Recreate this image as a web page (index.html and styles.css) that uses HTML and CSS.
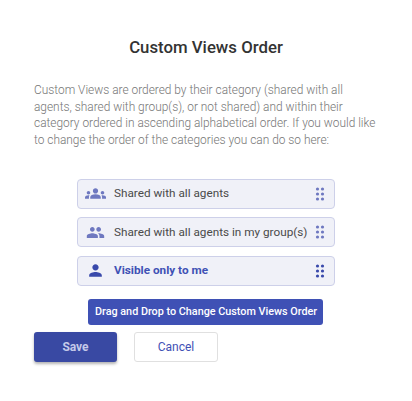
FILE: index.html
```html
<!DOCTYPE html>
<html lang="en">
<head>
<meta charset="utf-8">
<title>Custom Views Order</title>
<link rel="stylesheet" href="styles.css">
</head>
<body>
<main class="dialog">
  <h1 class="title">Custom Views Order</h1>
  <p class="desc">Custom Views are ordered by their category (shared with all agents, shared with group(s), or not shared) and within their category ordered in ascending alphabetical order. If you would like to change the order of the categories you can do so here:</p>
  <ul class="list">
    <li class="row">
      <svg class="icon" viewBox="0 0 24 24"><path d="M12 12.75c1.63 0 3.07.39 4.24.9 1.08.48 1.76 1.56 1.76 2.73V18H6v-1.61c0-1.18.68-2.26 1.76-2.73 1.17-.52 2.61-.91 4.24-.91zM4 13c1.1 0 2-.9 2-2s-.9-2-2-2-2 .9-2 2 .9 2 2 2zm1.13 1.1C4.76 14.04 4.39 14 4 14c-.99 0-1.93.21-2.78.58C.48 14.9 0 15.62 0 16.43V18h4.5v-1.61c0-.83.23-1.61.63-2.29zM20 13c1.1 0 2-.9 2-2s-.9-2-2-2-2 .9-2 2 .9 2 2 2zm4 3.43c0-.81-.48-1.53-1.22-1.85C21.93 14.21 20.99 14 20 14c-.39 0-.76.04-1.13.1.4.68.63 1.46.63 2.29V18H24v-1.57zM12 6c1.66 0 3 1.34 3 3s-1.34 3-3 3-3-1.34-3-3 1.34-3 3-3z"/></svg>
      <span class="label">Shared with all agents</span>
      <svg class="grip" viewBox="0 0 10 14"><circle cx="2.5" cy="2" r="1.6"/><circle cx="7.5" cy="2" r="1.6"/><circle cx="2.5" cy="7" r="1.6"/><circle cx="7.5" cy="7" r="1.6"/><circle cx="2.5" cy="12" r="1.6"/><circle cx="7.5" cy="12" r="1.6"/></svg>
    </li>
    <li class="row">
      <svg class="icon" viewBox="-1.3 -1.3 26.6 26.6"><path d="M16 11c1.66 0 2.99-1.34 2.99-3S17.66 5 16 5c-1.66 0-3 1.34-3 3s1.34 3 3 3zm-8 0c1.66 0 2.99-1.34 2.99-3S9.66 5 8 5C6.34 5 5 6.34 5 8s1.34 3 3 3zm0 2c-2.33 0-7 1.17-7 3.5V19h14v-2.5c0-2.33-4.67-3.5-7-3.5zm8 0c-.29 0-.62.02-.97.05 1.16.84 1.97 1.97 1.97 3.45V19h6v-2.5c0-2.33-4.67-3.5-7-3.5z"/></svg>
      <span class="label">Shared with all agents in my group(s)</span>
      <svg class="grip" viewBox="0 0 10 14"><circle cx="2.5" cy="2" r="1.6"/><circle cx="7.5" cy="2" r="1.6"/><circle cx="2.5" cy="7" r="1.6"/><circle cx="7.5" cy="7" r="1.6"/><circle cx="2.5" cy="12" r="1.6"/><circle cx="7.5" cy="12" r="1.6"/></svg>
    </li>
    <li class="row row-active">
      <svg class="icon" viewBox="-1.3 -1.3 26.6 26.6"><path d="M12 12c2.21 0 4-1.79 4-4s-1.79-4-4-4-4 1.79-4 4 1.79 4 4 4zm0 2c-2.67 0-8 1.34-8 4v2h16v-2c0-2.66-5.33-4-8-4z"/></svg>
      <span class="label">Visible only to me</span>
      <svg class="grip" viewBox="0 0 10 14"><circle cx="2.5" cy="2" r="1.6"/><circle cx="7.5" cy="2" r="1.6"/><circle cx="2.5" cy="7" r="1.6"/><circle cx="7.5" cy="7" r="1.6"/><circle cx="2.5" cy="12" r="1.6"/><circle cx="7.5" cy="12" r="1.6"/></svg>
    </li>
  </ul>
  <div class="hint-wrap"><div class="hint">Drag and Drop to Change Custom Views Order</div></div>
  <div class="actions">
    <button class="btn btn-save" type="button">Save</button>
    <button class="btn btn-cancel" type="button">Cancel</button>
  </div>
</main>
</body>
</html>
```
FILE: styles.css
```css
* { box-sizing: border-box; }
html, body { margin: 0; padding: 0; background: #fff; }
body { font-family: Roboto, "Liberation Sans", sans-serif; width: 412px; height: 401px; overflow: hidden; }
.dialog { padding: 37px 34px 0; display: flex; flex-direction: column; }
.title { margin: 0; font-size: 16.8px; line-height: 20px; font-weight: 500; color: #333; text-align: center; }
.desc { margin: 25px 0 0; font-size: 11.9px; line-height: 16.6px; font-weight: 300; color: #757575; width: 344px; }
.list { list-style: none; margin: 30.6px 0 0 43px; padding: 0; width: 258px; display: flex; flex-direction: column; gap: 8.7px; }
.row { height: 29.8px; display: flex; align-items: center; background: #f0f1f8; border: 1px solid #cdd0e9; border-radius: 4px; padding: 0 9px 0 7px; color: #4a4a4a; font-size: 11.75px; }
.icon { width: 21px; height: 21px; fill: #6e78c0; flex: none; }
.label { margin-left: 8px; flex: 1; white-space: nowrap; padding-bottom: 1px; }
.grip { width: 10px; height: 14px; fill: #6e78c0; flex: none; }
.row-active { color: #3f51b5; font-weight: 700; }
.row-active .icon, .row-active .grip { fill: #3949ab; }
.hint-wrap { margin: 13px 0 0 54px; }
.hint { display: inline-block; height: 26px; line-height: 26px; padding: 0 6px 0 7px; background: #3f51b5; border-radius: 3px; color: #fff; font-size: 10.8px; font-weight: 500; white-space: nowrap; }
.actions { display: flex; gap: 17px; margin-top: 7px; }
.btn { width: 83px; height: 30px; border-radius: 3px; font-family: inherit; font-size: 12px; padding: 0; }
.btn-save { background: #3949a3; border: 0; color: #c5cae9; font-weight: 700; box-shadow: 0 2px 3px rgba(0,0,0,.3); }
.btn-cancel { width: 84px; background: #fff; border: 1px solid #e0e0e0; color: #3f51b5; }
```
